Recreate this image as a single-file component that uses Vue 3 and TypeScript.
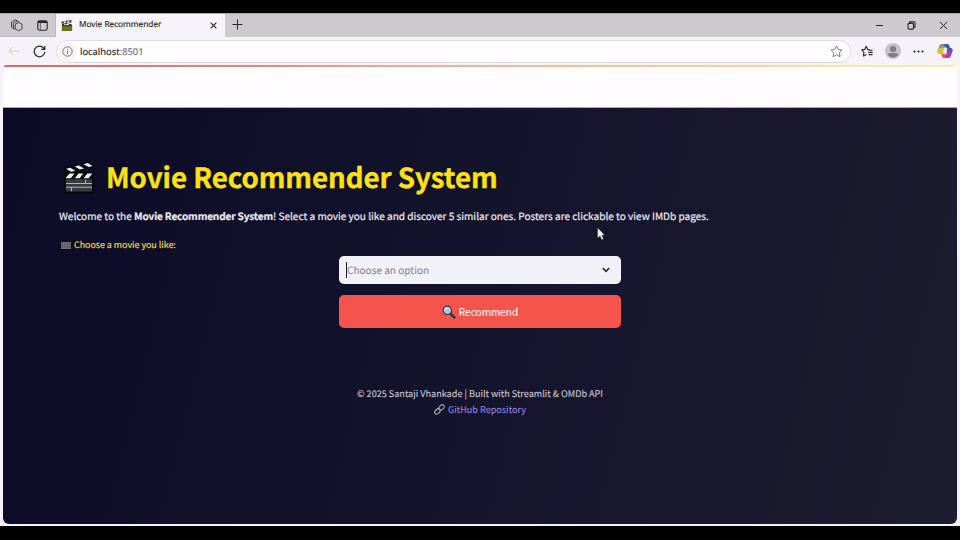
<script setup lang="ts">
const tabTitle = 'Movie Recommender'
const githubLabel = 'GitHub Repository'
</script>

<template>
  <div class="screen">
    <div class="browser">
      <div class="tabstrip">
        <div class="strip-tools">
          <svg class="i-work" width="13" height="13" viewBox="0 0 13 13" fill="none" stroke="#403e42" stroke-width="1">
            <path d="M5.2 5.3 8.6 3.5 12 5.1V9.8L8.6 11.8 5.2 10Z" />
            <path d="M3.4 9.3V4.2L7.3 2.1 9 2.8M1.5 8.2V3L5.2.9 7 1.5M1.5 8.2 3.4 9.6 5 10.2" />
          </svg>
          <svg class="i-tabs" width="11" height="11" viewBox="0 0 11 11" fill="none" stroke="#29272b" stroke-width="1.1">
            <rect x=".8" y=".8" width="9.4" height="9.4" rx="1.6" />
            <path d="M1 2H10" stroke-width="2" />
            <path d="M3.4 3V10" stroke-width=".6" />
          </svg>
        </div>
        <div class="tab">
          <svg width="12" height="11" viewBox="0 0 12 11">
            <path d="M.5 2.2 9.6.3 10.6 2.8 1 5Z" fill="#777b77" />
            <path d="M.5 2H3M5 1.2H6.5M8.5 .8H10.5M1 4.6H3M4.6 3.6H6M7.8 4.5H10.5" stroke="#272b27" stroke-width="1.2" />
            <path d="M3.2 2.6H4.5M6.5 2.2H8" stroke="#f5f5f5" stroke-width="1.4" />
            <rect x=".8" y="5.4" width="10.4" height="5.6" rx=".6" fill="#64751e" />
            <path d="M1 5.7H11" stroke="#252a25" stroke-width="1" />
          </svg>
          <span class="tab-title">{{ tabTitle }}</span>
          <svg class="tab-close" width="7" height="7" viewBox="0 0 7 7" stroke="#252327" stroke-width="1.1"><path d="M.6.6 6.4 6.4M6.4.6.6 6.4" /></svg>
        </div>
        <svg class="plus" width="11" height="11" viewBox="0 0 11 11" stroke="#29272b" stroke-width="1"><path d="M5.5.5V10.5M.5 5.5H10.5" /></svg>
        <div class="window-controls">
          <svg width="9" height="9" viewBox="0 0 9 9" stroke="#29272b"><path d="M1 4.5H8" /></svg>
          <svg width="9" height="9" viewBox="0 0 9 9" fill="none" stroke="#29272b" stroke-width="1.1"><rect x="1" y="2.4" width="5.5" height="5.7" rx="1" /><path d="M2.6 2V.9H7Q8 .9 8 2V6.3H6.8" /></svg>
          <svg width="9" height="9" viewBox="0 0 9 9" stroke="#29272b" stroke-width="1"><path d="M1 1 8 8M8 1 1 8" /></svg>
        </div>
      </div>

      <div class="toolbar">
        <svg class="back" width="12" height="10" viewBox="0 0 12 10" fill="none" stroke="#d0ced3"><path d="M11.5 5H1M5 1 1 5 5 9" /></svg>
        <svg class="reload" width="13" height="13" viewBox="0 0 13 13" fill="none" stroke="#29272b" stroke-width="1.2"><path d="M11.8 6.7A5.3 5.3 0 1 1 10.5 3L11.7 4.3M11.8 1V4.4H8.3" /></svg>
        <div class="address">
          <span class="info-wrap">
            <svg width="11" height="11" viewBox="0 0 11 11" fill="none" stroke="#77757a"><circle cx="5.5" cy="5.5" r="4.7" /><path d="M5.5 4.8V8M5.5 2.8V3.8" /></svg>
          </span>
          <span class="url">localhost<span class="port">:8501</span></span>
          <svg class="star" width="13" height="13" viewBox="0 0 13 13" fill="none" stroke="#818085"><path d="M6.5 1 8.2 4.5 12 5 9.2 7.7 9.9 11.7 6.5 9.8 3.1 11.7 3.8 7.7 1 5 4.8 4.5Z" stroke-linejoin="round" /></svg>
        </div>
        <svg class="favorites" width="13" height="13" viewBox="0 0 13 13" fill="none" stroke="#29272b" stroke-width="1.1"><path d="M8.6 4.6 6.7 4.4 5.2 1.3 3.8 4.4.7 4.9 3 7.3 2.4 11 5.6 9.4M7.6 5.2H11.6M7.2 7.4H11.6M7.6 9.6H11.6" stroke-linejoin="round" /></svg>
        <svg class="profile" width="16" height="16" viewBox="0 0 16 16"><circle cx="8" cy="8" r="8" fill="#c5c3c5" /><circle cx="8" cy="6" r="3.1" fill="#817f81" /><path d="M3 11.7Q3 10 4.8 10H11.2Q13 10 13 11.7 11.5 14.5 8 14.5T3 11.7" fill="#817f81" /></svg>
        <svg class="more" width="11" height="3" viewBox="0 0 11 3" fill="#29272b"><circle cx="1.5" cy="1.5" r="1.1" /><circle cx="5.5" cy="1.5" r="1.1" /><circle cx="9.5" cy="1.5" r="1.1" /></svg>
        <svg class="copilot" width="16" height="16" viewBox="0 0 16 16">
          <path d="M4.5 1H9L6.8 7.2 5.7 10.6H2.6Q0 10.3.6 7.5L2.2 3Q2.8 1 4.5 1" fill="#7d9a86" />
          <path d="M.6 7.3 1.5 4.8H7.3L5.7 10.6H2.6Q0 10.3.6 7.3" fill="#ccc63e" />
          <path d="M6 1H10.3Q12 1 12.5 3L13.1 5H9.7Q8.4 5 7.8 3.2 7.3 1.5 6 1" fill="#3b5eac" />
          <path d="M11.5 15H7Q5.3 15 4.8 13L4.2 10.8H7.4Q8.8 10.8 9.4 12.8 10 14.6 11.5 15" fill="#e9594a" />
          <path d="M10.2 5H13.4Q16 5.3 15.4 8.5L13.9 13Q13.2 15 11.5 15H8L9.5 10Z" fill="#a33fb7" />
          <path d="M10.2 5H13.4Q16 5.3 15.4 8.5H9.4Z" fill="#5557b4" />
          <path d="M6.8 5.5H9.9L9.2 10.4H5.9Z" fill="#eeeaf4" />
        </svg>
      </div>

      <div class="page">
        <header class="app-header"></header>
        <main class="app">
          <h1>
            <svg class="clapper" width="32" height="34" viewBox="0 0 32 34">
              <path d="M.4 8.2Q.3 7.2 1.5 6.9L28.4.7Q30 .4 30.4 1.8L31.2 5.4 3 13.8 1.6 13Z" fill="#07080a" />
              <path d="m3 8.8 4.3-1.1 5 3.1-4 1.2zM11.7 6.6l4.2-1.1 5.2 3-4.2 1.1zM20.5 4.2l4.2-1.1 4.9 2.8-4 1.2z" fill="#eeeef1" />
              <rect x="1.2" y="11.7" width="29.8" height="22" rx="2" fill="#07080a" />
              <path d="M3 19.3H29V30.2Q29 31.5 27.8 31.5H4.3Q3 31.5 3 30.2Z" fill="#3a3b3e" />
              <path d="M6.6 13.5h4.9l-3.7 4.7H3v-.8zM15.5 13.5h4.8l-3.7 4.7h-4.8zM24.3 13.5H29v.4l-3.5 4.3h-4.8z" fill="#eeeef1" />
              <path d="M3 23.5H29M3 27.3H29M22.6 19.7V23.5M8.5 27.3V31.3" stroke="#b2b3b7" stroke-width="1.1" />
            </svg>
            <span class="title-text">Movie Recommender System</span>
          </h1>
          <p class="welcome"><span class="w1">Welcome to the </span><strong>Movie Recommender System</strong><span class="w2">! Select a movie you like and discover 5 similar ones. Posters are clickable to view IMDb pages.</span></p>
          <div class="label">
            <svg width="10" height="7" viewBox="0 0 10 7"><rect width="10" height="7" fill="#6f7074" /><path d="M1 1V6M9 1V6" stroke="#38393e" stroke-dasharray="1 1" /><path d="M2.5 2.2H4.3M5.7 2.2H7.5M2.5 4.7H4.3M5.7 4.7H7.5" stroke="#4a4b50" /></svg>
            <span>Choose a movie you like:</span>
          </div>
          <div class="form">
            <div class="select">
              <i class="caret"></i>
              <span class="placeholder">Choose an option</span>
              <svg width="8" height="6" viewBox="0 0 8 6" fill="none" stroke="#29282e" stroke-width="1.6"><path d="M.8 1 4 4.3 7.2 1" /></svg>
            </div>
            <button class="recommend" type="button">
              <svg width="14" height="14" viewBox="0 0 14 14"><path d="M8.3 8.3 12.3 12.3" stroke="#202934" stroke-width="2.6" stroke-linecap="round" /><path d="M9.5 9.3 12 11.8" stroke="#65717b" stroke-width=".8" /><circle cx="5.3" cy="5.3" r="4.2" fill="#a9c9e2" stroke="#303b45" stroke-width="1.2" /><path d="M2.9 5Q3 3 5 2.8" fill="none" stroke="#e8f4fb" stroke-width="1.2" /></svg>
              <span>Recommend</span>
            </button>
          </div>
          <footer>
            <div class="copyright">© 2025 Santaji Vhankade | Built with Streamlit &amp; OMDb API</div>
            <div class="repo">
              <svg width="11" height="11" viewBox="0 0 11 11" fill="none" stroke="#a3a39c" stroke-width="1.2"><rect x="4.4" y="1.5" width="6.2" height="4" rx="2" transform="rotate(-45 7.5 3.5)" /><rect x=".4" y="5.4" width="6.2" height="4" rx="2" transform="rotate(-45 3.5 7.4)" /></svg>
              <span>{{ githubLabel }}</span>
            </div>
          </footer>
        </main>
      </div>
    </div>
    <svg class="pointer" width="8" height="14" viewBox="0 0 8 14"><path d="M.6.7V11.1L3 8.9 4.7 12.8 6.5 12 4.8 8.2H7.7Z" fill="#fff" stroke="#17182b" stroke-width=".4" /></svg>
  </div>
</template>

<style>
body { margin: 0; background: #000; }
</style>

<style scoped>
* { box-sizing: border-box; }
.screen { position: relative; width: 960px; height: 540px; padding-top: 13px; background: #000; overflow: hidden; font-family: "Noto Sans CJK SC", "Noto Sans", sans-serif; text-rendering: geometricPrecision; }
svg { display: block; flex: none; }
.browser { display: flex; flex-direction: column; height: 513px; background: #f5f3f8; padding-bottom: 2px; }
.tabstrip { display: flex; height: 24px; background: #cccacd; border-top: 1px solid #aaa8ab; flex: none; }
.strip-tools { display: flex; align-items: center; gap: 14px; width: 56px; padding-left: 10px; border-bottom: 1px solid #bebcc0; border-right: 1px solid #bab8bd; border-bottom-right-radius: 3px; }
.i-tabs { margin-left: 0; }
.tab { display: flex; align-items: center; width: 169px; padding: 0 8px 1px 5px; background: #f6f4f8; }
.tab-title { margin-left: 6px; margin-top: -1px; font: 8.3px "Noto Sans", sans-serif; letter-spacing: -.03px; -webkit-text-stroke: .15px #29272b; color: #29272b; white-space: nowrap; }
.tab-close { margin-left: auto; }
.plus { align-self: center; margin-left: 7px; margin-top: -2px; }
.window-controls { display: flex; align-items: center; gap: 23px; margin-left: auto; padding-right: 12px; }
.toolbar { display: flex; align-items: center; height: 28px; padding: 0 7px 0 8px; flex: none; }
.reload { margin-left: 13px; }
.address { display: flex; align-items: center; width: 795px; height: 23px; margin-left: 10px; padding: 0 7px 0 1px; border: 1px solid #dddbe0; border-radius: 12px; background: #fffdff; }
.info-wrap { display: flex; align-items: center; justify-content: center; width: 19px; height: 19px; border-radius: 50%; background: #f5f3f6; }
.url { margin-left: 3px; font: 9.4px "Noto Sans", sans-serif; color: #29272b; -webkit-text-stroke: .15px; }
.port { color: #77757a; }
.star { margin-left: auto; }
.favorites { margin-left: 10px; }
.profile { margin-left: 11px; }
.more { margin-left: 12px; }
.copilot { margin-left: auto; }
.page { flex: 1; margin: 0 3px; border-radius: 4px 4px 6px 6px; overflow: hidden; background: #fffdff; display: flex; flex-direction: column; }
.app-header { flex: none; height: 43px; background: linear-gradient(90deg, #df646a, #e28a85 28%, #ecac97 42%, #eebf95 58%, #f0d29c 74%, #f4e9ab 90%, #f7edaa) 0 0 / 100% 2px no-repeat, #fffdff; border-bottom: 1px solid #aaa9b0; }
.app { flex: 1; background: linear-gradient(104deg, #0b0b28, #1d1c30); padding: 51px 56px 0; color: #ebeaf2; }
h1 { display: flex; align-items: center; height: 36px; margin: 0; padding-left: 4px; font-size: 27.7px; line-height: 36px; color: #fbe116; white-space: nowrap; letter-spacing: -.05px; -webkit-text-stroke: .35px #fbe116; }
.title-text { margin-left: 11px; margin-top: -2px; }
.welcome { margin: 12px 0 0; height: 18px; font-size: 10.05px; line-height: 18px; white-space: pre; -webkit-text-stroke: .2px; }
.welcome strong { letter-spacing: -.15px; }
.label { display: flex; align-items: center; height: 16px; margin-top: 12px; padding-left: 2px; font-size: 8.9px; line-height: 16px; color: #ead23a; white-space: nowrap; -webkit-text-stroke: .2px; }
.label span { margin-left: 3px; }
.form { display: flex; flex-direction: column; gap: 11px; width: 282px; margin: 3px auto 0; }
.select { display: flex; align-items: center; height: 28px; padding: 0 11px 0 7px; border-radius: 5px; background: #f2f1f8; }
.caret { width: 1px; height: 16px; background: #202027; }
.placeholder { margin-top: -1px; font-size: 10.05px; color: #8b8a94; white-space: nowrap; -webkit-text-stroke: .1px; }
.select svg { margin-left: auto; }
.recommend { display: flex; justify-content: center; align-items: center; gap: 3px; height: 33px; padding: 0; border: 0; border-radius: 5px; background: #f3544c; color: #fceae8; font: 10.05px "Noto Sans CJK SC", sans-serif; -webkit-text-stroke: .2px; }
footer { display: flex; flex-direction: column; align-items: center; margin-top: 57px; font-size: 9.1px; line-height: 16px; color: #c2c1cd; white-space: nowrap; -webkit-text-stroke: .15px; }
.repo { display: flex; align-items: center; gap: 3px; color: #8d80dd; }
.pointer { position: absolute; left: 597px; top: 227px; }
</style>
